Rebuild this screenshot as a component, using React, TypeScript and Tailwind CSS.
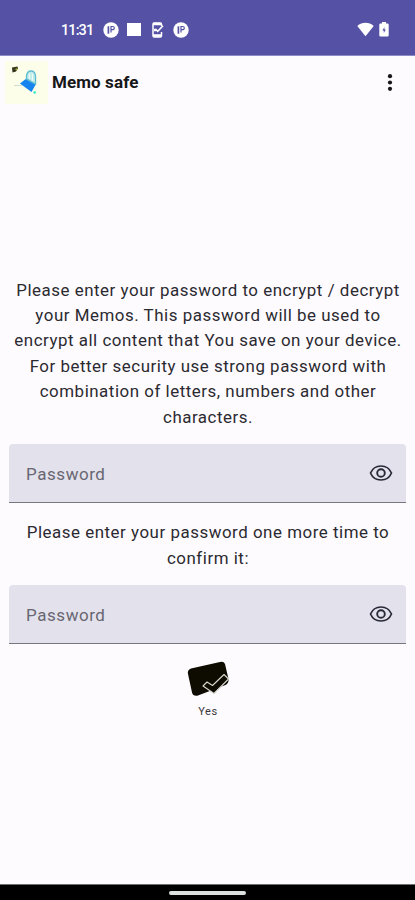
import React from "react";

function ParkingBadge() {
  return (
    <svg width="16" height="16" viewBox="0 0 16 16">
      <circle cx="8" cy="8" r="7.7" fill="#fff" />
      <path d="M5.400 4.300v7.400" fill="none" stroke="#5552a5" strokeWidth="1.700" />
      <path d="M8 10.500V4.500h1.700a1.600 1.600 0 0 1 0 3.200H8" fill="none" stroke="#5552a5" strokeWidth="1.200" />
    </svg>
  );
}

function StatusBar() {
  return (
    <header className="flex h-14 shrink-0 items-center border-b border-[#8d8ac4] bg-[#5552a5] pt-1 text-white">
      <span className="ml-[61px] w-[42px] pt-[3px] text-[14.5px] font-medium leading-none tracking-[-0.9px]">11:31</span>
      <ParkingBadge />
      <span className="ml-[8px] h-[13px] w-[14px] bg-white" />
      <svg className="ml-[11px]" width="12" height="16" viewBox="0 0 12 16">
        <path d="M9.5 4V2.2Q9.5 1 8.3 1H2.2Q1 1 1 2.2v11.5Q1 15 2.2 15h6.1q1.2 0 1.2-1.3V10" fill="none" stroke="#fff" strokeWidth="1.5" />
        <path d="M1 2h8M1 13.5h8M2 8h2" stroke="#fff" strokeWidth="2.4" />
        <path d="m3.5 7 2.2 2.3L11 3.8" fill="none" stroke="#fff" strokeWidth="1.6" />
      </svg>
      <span className="ml-[9px] flex"><ParkingBadge /></span>
      <svg className="ml-auto" width="17" height="15" viewBox="0 0 17 15">
        <path d="M.3 4C5-.4 12-.4 16.7 4L8.5 14.3Z" fill="#fff" />
      </svg>
      <svg className="ml-[5px] mr-[26px]" width="10" height="15" viewBox="0 0 10 15">
        <path d="M3 0h4v1.5h1.5Q9.7 1.5 9.7 2.7v10.6q0 1.2-1.2 1.2h-7Q.3 14.5.3 13.3V2.7Q.3 1.5 1.5 1.5H3Z" fill="#fff" />
        <path d="M5.500 5 3.400 8.500h1.400v2.400L6.800 7.500H5.400Z" fill="#5552a5" />
      </svg>
    </header>
  );
}

function MemoLogo() {
  return (
    <svg className="shrink-0" width="43" height="43" viewBox="0 0 43 43">
      <path d="M0 0h43v43H0Z" fill="#fcfee9" />
      <path d="m7 6.500 5.500-1 .5 2-2 3-3.500 1Z" fill="#34351c" />
      <path d="m10 8 2.500-1-1 2.500Z" fill="#b9ba32" />
      <path d="M9 24.500h8" stroke="#d6dbd0" />
      <path d="m15 22.500 7-5.500 9 6-4.500 8Z" fill="#1683ef" />
      <path d="M21.500 18v-3q.5-5 4.500-5t4.500 5v8Z" fill="#b7e7e9" fillOpacity=".8" stroke="#5fbdd2" strokeWidth="1.400" />
      <path d="M24.500 13v5M27.500 13v7" fill="none" stroke="#e9fbf4" />
      <circle cx="29.700" cy="31.500" r="1.400" fill="#51efcf" />
    </svg>
  );
}

function PasswordField() {
  return (
    <div className="mx-[9px] flex h-[59px] items-center rounded-t-[4px] border-b border-[#777681] bg-[#e2e1ec] pl-[17px] pr-[13px]">
      <input
        aria-label="Password"
        placeholder="Password"
        type="password"
        className="min-w-0 flex-1 bg-transparent pt-[3px] text-[17px] tracking-[0.55px] outline-none placeholder:text-[#686671]"
      />
      <svg width="24" height="18" viewBox="0 0 24 18" fill="none" stroke="#292936">
        <path d="M1.500 9Q4.500 2 12 2T22.500 9Q19.500 16 12 16T1.500 9Z" strokeWidth="1.700" />
        <circle cx="12" cy="9" r="3.800" strokeWidth="1.900" />
      </svg>
    </div>
  );
}

function Lines({ lines }: { lines: string[] }) {
  return (
    <p className="pl-px text-center text-[16.9px] leading-[25.4px] tracking-[0.53px] text-[#2b2a30]">
      {lines.map((line) => (
        <span key={line} className="block whitespace-nowrap">{line}</span>
      ))}
    </p>
  );
}

export default function App() {
  return (
    <div className="flex h-[900px] w-full flex-col overflow-hidden bg-[#fefbff] font-['Roboto',sans-serif]">
      <StatusBar />
      <div className="flex h-[53px] shrink-0 items-center pl-[5px]">
        <MemoLogo />
        <h1 className="ml-[4px] pt-px text-[17px] font-bold tracking-[0.100px] text-[#171719]">Memo safe</h1>
        <svg className="ml-auto mr-[22px]" width="6" height="18" viewBox="0 0 6 18" fill="#171719">
          <circle cx="3" cy="2.200" r="2.100" />
          <circle cx="3" cy="8.500" r="2.100" />
          <circle cx="3" cy="14.800" r="2.100" />
        </svg>
      </div>
      <main className="flex min-h-0 flex-1 flex-col pt-[168.5px]">
        <Lines
          lines={[
            "Please enter your password to encrypt / decrypt",
            "your Memos. This password will be used to",
            "encrypt all content that You save on your device.",
            "For better security use strong password with",
            "combination of letters, numbers and other",
            "characters.",
          ]}
        />
        <div className="mt-[14.1px]"><PasswordField /></div>
        <div className="mt-[17.4px]">
          <Lines lines={["Please enter your password one more time to", "confirm it:"]} />
        </div>
        <div className="mt-[13.8px]"><PasswordField /></div>
        <button className="mx-auto mt-[17px] flex flex-col items-center pl-px">
          <svg width="44" height="37" viewBox="0 0 44 37">
            <path d="M5 7.500 34 1q4-.8 5 2l3.500 15q.5 4-3 6L12 34.500q-5 1-6-3L2 13q-1-4 3-5.500Z" fill="#0e0c00" />
            <path d="m17 25 4-4 5.500 3.500L38 13.500l4.500 4.500L28 32.500Z" fill="#0e0c00" stroke="#d9d7cf" strokeWidth="1.100" strokeLinejoin="round" />
          </svg>
          <span className="mt-[7px] text-[11px] leading-[14px] tracking-[0.5px] text-[#37363b]">Yes</span>
        </button>
      </main>
      <footer className="flex h-[16px] shrink-0 items-center justify-center border-t border-[#6d706f] bg-black">
        <span className="mt-px h-[4px] w-[77px] rounded-full bg-[#dce2df]" />
      </footer>
    </div>
  );
}
